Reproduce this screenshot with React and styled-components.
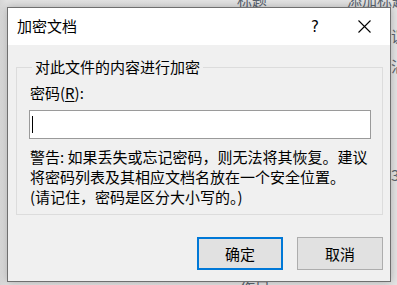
import styled, { createGlobalStyle } from "styled-components";

const GlobalStyle = createGlobalStyle`
  html, body {
    margin: 0;
    padding: 0;
    background: #e4e4e4;
    font-family: "Noto Sans CJK SC", "Noto Sans", sans-serif;
    overflow: hidden;
  }
`;

const Desktop = styled.div`
  position: relative;
  width: 397px;
  height: 285px;
  background: linear-gradient(to right, #d6d6d6 0px, #e2e2e2 7px, #e4e4e4 100%);
  overflow: hidden;
`;

const Behind = styled.span`
  position: absolute;
  font-size: 15px;
  line-height: 15px;
  color: #5b6470;
  white-space: nowrap;
`;

const Dialog = styled.div`
  position: absolute;
  left: 7px;
  top: 7px;
  width: 382px;
  height: 273px;
  border: 1px solid #6f6f6f;
  background: #f0f0f0;
  display: flex;
  flex-direction: column;
  box-shadow: 0 0 8px rgba(0, 0, 0, 0.25);
`;

const TitleBar = styled.div`
  height: 37px;
  background: #ffffff;
  display: flex;
  align-items: center;
  padding-left: 9px;
  font-size: 15px;
  color: #000;
`;

const TitleText = styled.div`
  flex: 1;
  line-height: 20px;
  margin-top: -1px;
`;

const TitleButton = styled.div`
  width: ${({ $wide }) => ($wide ? "52px" : "46px")};
  height: 37px;
  display: flex;
  align-items: center;
  justify-content: center;
  font-family: "DejaVu Sans", sans-serif;
  font-size: 15px;
  color: #000;
`;

const Body = styled.div`
  flex: 1;
  display: flex;
  flex-direction: column;
  padding: 12px 7px 11px 8px;
`;

const Group = styled.fieldset`
  margin: 0;
  padding: 0 11px 7px 12px;
  border: 1px solid #dcdcdc;
  display: flex;
  flex-direction: column;
`;

const Legend = styled.legend`
  margin-left: 3px;
  padding: 0 3px;
  font-size: 15px;
  line-height: 20px;
  color: #000;
`;

const Label = styled.label`
  font-size: 15px;
  line-height: 20px;
  margin: 6px 0 0 1px;
  color: #000;

  u {
    text-decoration: underline;
    text-underline-offset: 2px;
  }
`;

const Input = styled.div`
  margin-top: 7px;
  height: 27px;
  border: 1px solid #9a9a9a;
  background: #fff;
  display: flex;
  align-items: center;
  padding-left: 2px;
`;

const Caret = styled.div`
  width: 1px;
  height: 17px;
  background: #000;
`;

const Warning = styled.div`
  margin: 8px 0 0 1px;
  font-size: 15px;
  line-height: 20px;
  color: #000;
  white-space: nowrap;
`;

const Footer = styled.div`
  margin-top: auto;
  display: flex;
  justify-content: flex-end;
  gap: 14px;
`;

const Button = styled.div`
  box-sizing: border-box;
  width: 86px;
  height: 33px;
  display: flex;
  align-items: center;
  justify-content: center;
  font-size: 15px;
  color: #000;
  background: #e1e1e1;
  border: ${({ $primary }) => ($primary ? "2px solid #0078d7" : "1px solid #adadad")};
`;

function CloseIcon() {
  return (
    <svg width="13" height="13" viewBox="0 0 13 13">
      <path d="M0.5 0.5 L12.5 12.5 M12.5 0.5 L0.5 12.5" stroke="#000" strokeWidth="1.1" />
    </svg>
  );
}

export default function App() {
  return (
    <>
      <GlobalStyle />
      <Desktop>
        <Behind style={{ left: 237, top: -8 }}>标题</Behind>
        <Behind style={{ left: 347, top: -8 }}>添加标题</Behind>
        <Behind style={{ left: 391, top: 28 }}>议</Behind>
        <Behind style={{ left: 391, top: 58 }}>沾</Behind>
        <Behind style={{ left: 391, top: 167 }}>3</Behind>
        <Behind style={{ left: 240, top: 279 }}>作目</Behind>
        <Dialog>
          <TitleBar>
            <TitleText>加密文档</TitleText>
            <TitleButton>?</TitleButton>
            <TitleButton $wide>
              <CloseIcon />
            </TitleButton>
          </TitleBar>
          <Body>
            <Group>
              <Legend>对此文件的内容进行加密</Legend>
              <Label>
                密码(<u>R</u>):
              </Label>
              <Input>
                <Caret />
              </Input>
              <Warning>
                <div>警告: 如果丢失或忘记密码，则无法将其恢复。建议</div>
                <div>将密码列表及其相应文档名放在一个安全位置。</div>
                <div>(请记住，密码是区分大小写的。)</div>
              </Warning>
            </Group>
            <Footer>
              <Button $primary>确定</Button>
              <Button>取消</Button>
            </Footer>
          </Body>
        </Dialog>
      </Desktop>
    </>
  );
}
